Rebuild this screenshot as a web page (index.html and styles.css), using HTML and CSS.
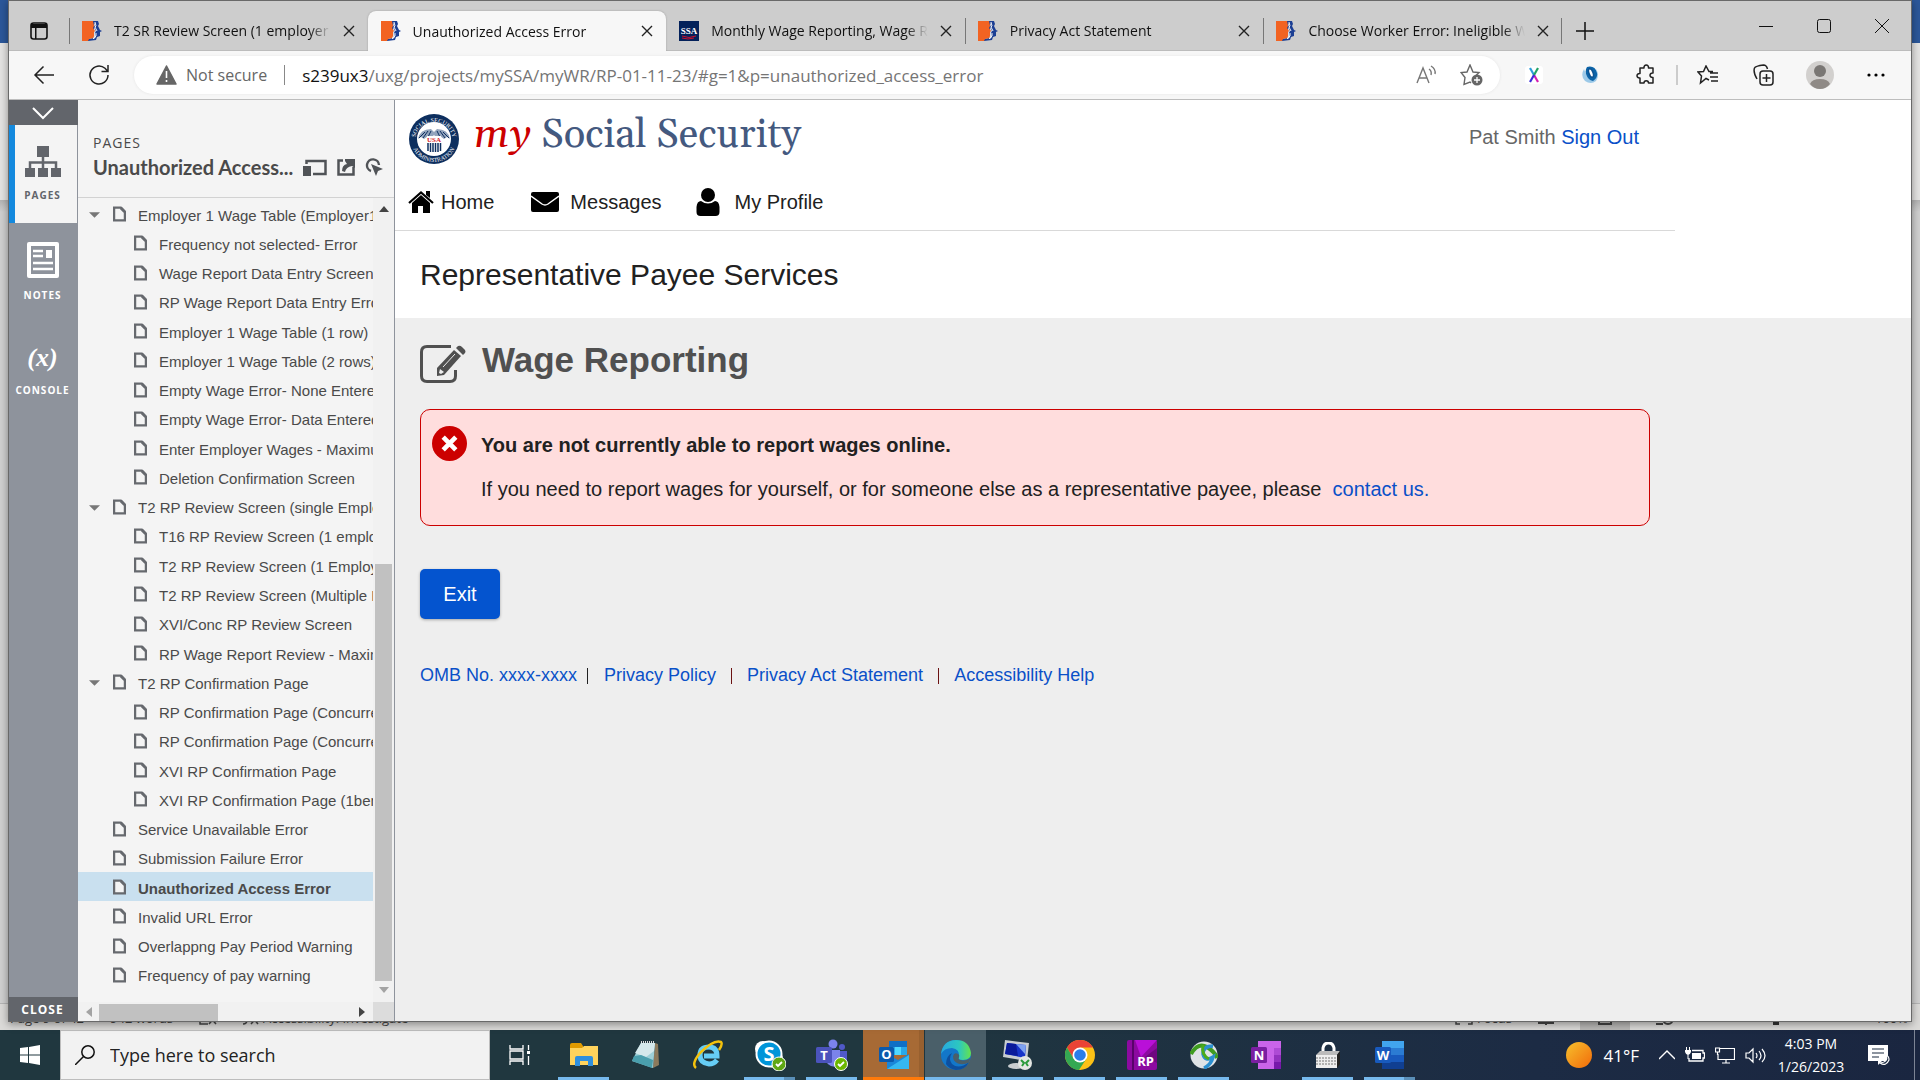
FILE: index.html
```html
<!DOCTYPE html>
<html lang="en">

<head>
  <meta charset="UTF-8">
  <meta name="viewport" content="width=device-width, initial-scale=1.0">
  <title>Unauthorized Access Error</title>
  <link rel="stylesheet" href="styles.css">
</head>

<body>
  <!-- shared icons -->
  <svg class="sprite" aria-hidden="true">
    <symbol id="i-face" viewBox="0 0 20 20">
      <path d="M10 0h6l1 3-1 2 2 4 2 1-2 1v4l-3 1-1 3-8 1v-2l6-1z" fill="#1c3f94"/>
      <path d="M12 1l1 3-1 2 2 4-1 2 1 4-2 2z" fill="#d5dbe8"/>
      <path d="M0 0h11l1 5-1 2 2 3-1 1v4l-1 2-4 1-1 2H0z" fill="#f26322"/>
      <path d="M13 1l1 4-1 1 2 4M14 12v3l-3 3" fill="none" stroke="#f4f4f4" stroke-width="1"/>
    </symbol>
    <symbol id="i-x" viewBox="0 0 12 12"><path d="M1 1l10 10M11 1L1 11" fill="none" stroke="#222" stroke-width="1.4"/></symbol>
    <symbol id="i-doc" viewBox="0 0 14 16"><path d="M1.200 1.200h7.300l4.300 4.300v9.300H1.200z" fill="#f4f4f4" stroke="#66696e" stroke-width="2.400"/><path d="M8.500 1.500l4 4" stroke="#66696e" stroke-width="3"/></symbol>
    <symbol id="i-down" viewBox="0 0 12 6"><path d="M0 0h12L6 6z" fill="#777"/></symbol>
  </svg>

  <div class="desktop">
    <!-- word window in the back -->
    <div class="word">
      <div class="word-title"></div>
      <div class="word-ribbon"></div>
      <div class="word-page"></div>
      <div class="word-status">
        <span>Page 9 of 42</span>
        <span>942 words</span>
        <svg width="18" height="14" viewBox="0 0 18 14"><path d="M1 1v12h8M10 5l7 8M17 5l-7 8" fill="none" stroke="#444" stroke-width="1.5"/></svg>
        <span class="word-access"><svg width="16" height="14" viewBox="0 0 16 14"><path d="M4 1v8q0 4-4 4M8 5l7 8M15 5l-7 8" fill="none" stroke="#444" stroke-width="1.5"/></svg>Accessibility: Investigate</span>
        <span class="word-focus"><svg width="18" height="14" viewBox="0 0 18 14"><path d="M1 9v4h4M17 9v4h-4M5 3h8v6H5z" fill="none" stroke="#444" stroke-width="1.5"/></svg>Focus</span>
        <svg width="16" height="14" viewBox="0 0 16 14"><path d="M0 12h16M8 0v14" stroke="#444" stroke-width="2"/></svg>
        <span class="word-view"><svg width="14" height="14" viewBox="0 0 14 14"><path d="M1 1h12v12H1zM4 9h6" fill="none" stroke="#444" stroke-width="2"/></svg></span>
        <svg width="18" height="14" viewBox="0 0 18 14"><path d="M0 13h7M1 8h5" stroke="#444" stroke-width="2"/><circle cx="12" cy="8" r="5" fill="none" stroke="#444" stroke-width="2"/></svg>
        <svg class="word-knob" width="6" height="14" viewBox="0 0 6 14"><path d="M0 0h6v14H0z" fill="#333"/></svg>
        <span class="word-zoom">100%</span>
      </div>
    </div>

    <div class="browser">
      <div class="tab-strip">
        <button class="workspaces" aria-label="Tab actions">
          <svg width="20" height="20" viewBox="0 0 20 20"><rect x="2" y="2" width="16" height="16" rx="2.5" fill="none" stroke="#111" stroke-width="1.6"/><path d="M2 3h16v4H2zM6 7h1.5v11H6z" fill="#111"/></svg>
        </button>
        <div class="tabs">
          <div class="tab">
            <svg class="favicon"><use href="#i-face"/></svg>
            <span class="tab-title">T2 SR Review Screen (1 employer</span>
            <button class="tab-close" aria-label="Close tab"><svg><use href="#i-x"/></svg></button>
          </div>
          <div class="tab active">
            <svg class="favicon"><use href="#i-face"/></svg>
            <span class="tab-title">Unauthorized Access Error</span>
            <button class="tab-close" aria-label="Close tab"><svg><use href="#i-x"/></svg></button>
          </div>
          <div class="tab no-line">
            <svg class="favicon" viewBox="0 0 20 20"><rect width="20" height="20" fill="#03215a"/><text x="10" y="13" text-anchor="middle" class="ssa-text">SSA</text><path d="M3 15q7 3 14 0M3 17q6 2 12 0" fill="none" stroke="#c8102e"/></svg>
            <span class="tab-title">Monthly Wage Reporting, Wage Reports</span>
            <button class="tab-close" aria-label="Close tab"><svg><use href="#i-x"/></svg></button>
          </div>
          <div class="tab">
            <svg class="favicon"><use href="#i-face"/></svg>
            <span class="tab-title">Privacy Act Statement</span>
            <button class="tab-close" aria-label="Close tab"><svg><use href="#i-x"/></svg></button>
          </div>
          <div class="tab">
            <svg class="favicon"><use href="#i-face"/></svg>
            <span class="tab-title">Choose Worker Error: Ineligible Worker</span>
            <button class="tab-close" aria-label="Close tab"><svg><use href="#i-x"/></svg></button>
          </div>
        </div>
        <button class="new-tab" aria-label="New tab"><svg width="18" height="18" viewBox="0 0 18 18"><path d="M9 0v18M0 9h18" stroke="#111" stroke-width="1.5"/></svg></button>
        <div class="window-buttons">
          <button aria-label="Minimize"><svg width="14" height="14" viewBox="0 0 14 14"><path d="M0 7.500h14" stroke="#111"/></svg></button>
          <button aria-label="Maximize"><svg width="14" height="14" viewBox="0 0 14 14"><rect x=".5" y=".5" width="13" height="13" rx="2" fill="none" stroke="#111"/></svg></button>
          <button aria-label="Close"><svg width="14" height="14" viewBox="0 0 14 14"><path d="M0 0l14 14M14 0L0 14" stroke="#111"/></svg></button>
        </div>
      </div>

      <div class="toolbar">
        <button class="tool" aria-label="Back"><svg width="22" height="20" viewBox="0 0 22 20"><path d="M21 10H2M10.500 1.500L2 10l8.500 8.500" fill="none" stroke="#222" stroke-width="1.5"/></svg></button>
        <button class="tool" aria-label="Refresh"><svg width="22" height="22" viewBox="0 0 22 22"><path d="M20 11a9 9 0 1 1-3-6.700L19.500 7M20 1v6.500h-6.500" fill="none" stroke="#222" stroke-width="1.5"/></svg></button>
        <div class="address">
          <svg width="21" height="20" viewBox="0 0 21 20"><path d="M10.500 1L20 19H1z" fill="#666" stroke="#666" stroke-width="1.500" stroke-linejoin="round"/><path d="M10.500 6v7M10.500 15v2" stroke="#fff" stroke-width="1.600"/></svg>
          <span class="not-secure">Not secure</span>
          <span class="address-line"></span>
          <span class="url"><b>s239ux3</b>/uxg/projects/mySSA/myWR/RP-01-11-23/#g=1&amp;p=unauthorized_access_error</span>
          <button aria-label="Read aloud"><svg width="22" height="20" viewBox="0 0 22 20"><path d="M1 18L7 3l6 15M3 13h8M13 4q3 2 2 6M15 1q5 3 4 8" fill="none" stroke="#777" stroke-width="1.400"/></svg></button>
          <button aria-label="Add to favorites"><svg width="24" height="22" viewBox="0 0 24 22"><path d="M11 19l-1-1-6 2.500 1-7-4-5 6-.5L10 1l3 7 6 .500-3 3" fill="none" stroke="#666" stroke-width="1.400"/><circle cx="17" cy="16" r="5.500" fill="#666"/><path d="M17 13v6M14 16h6" stroke="#fff" stroke-width="1.300"/></svg></button>
        </div>
        <div class="extensions">
          <button aria-label="Extension X"><svg width="18" height="18" viewBox="0 0 18 18"><rect width="18" height="18" rx="3" fill="#fff"/><path d="M5 2l4 7" stroke="#2d9cdb" stroke-width="2.200"/><path d="M9 9l4 7" stroke="#d61fb0" stroke-width="2.200"/><path d="M13 2L9 9" stroke="#21a366" stroke-width="2.200"/><path d="M9 9l-4 7" stroke="#3b2bd9" stroke-width="2.200"/></svg></button>
          <button aria-label="Extension ring"><svg width="18" height="18" viewBox="0 0 18 18"><path d="M3 3Q-1 10 4 15q6 4 11 0 4-6 0-12 1 9-4 10-5 0-8-10z" fill="#9cc9e8"/><path d="M6 1q8-2 10 6 1 5-4 8-5-1-7-7-1-4 1-7z" fill="#0c64a8"/><ellipse cx="10" cy="7" rx="2" ry="4.500" transform="rotate(-20 10 7)" fill="#fff" stroke="#0c5393" stroke-width="1.500"/></svg></button>
          <button aria-label="Extensions"><svg width="20" height="22" viewBox="0 0 20 22"><path d="M4 4h4c-.5-4 5-4 4.500 0H17v5c-4-.5-4 5 0 4.500V19h-4.500c0-3-4.500-3-4.500 0H4v-5c-4 .5-4-5 0-4.500z" fill="none" stroke="#222" stroke-width="1.500" stroke-linejoin="round"/></svg></button>
          <span class="tool-line"></span>
          <button aria-label="Favorites"><svg width="22" height="20" viewBox="0 0 22 20"><path d="M12 15l-3-1.500L3.500 18l1-7L1 7l5.500-.5L9 1l3 5.500h4M13 8h8M13 12h8M14 16h7" fill="none" stroke="#222" stroke-width="1.500"/></svg></button>
          <button aria-label="Collections"><svg width="22" height="22" viewBox="0 0 22 22"><path d="M4 15Q0 8 1.500 4q1-2 9-3 3 0 4 4" fill="none" stroke="#222" stroke-width="1.500"/><rect x="7" y="7" width="13" height="14" rx="3" fill="#f7f7f7" stroke="#222" stroke-width="1.500"/><path d="M13.500 10v8M9.500 14h8" stroke="#222" stroke-width="1.500"/></svg></button>
          <button aria-label="Profile"><svg width="28" height="28" viewBox="0 0 28 28"><circle cx="14" cy="14" r="14" fill="#d2d0ce"/><circle cx="14" cy="10" r="6" fill="#7a7774"/><path d="M4 23q2-5 10-5t10 5q-4 5-10 5T4 23z" fill="#8f8a86"/></svg></button>
          <button aria-label="Settings and more"><svg width="18" height="4" viewBox="0 0 18 4"><circle cx="2" cy="2" r="1.600"/><circle cx="9" cy="2" r="1.600"/><circle cx="16" cy="2" r="1.600"/></svg></button>
        </div>
      </div>

      <div class="viewport">
        <nav class="rail">
          <button class="rail-toggle" aria-label="Collapse"><svg width="24" height="14" viewBox="0 0 24 14"><path d="M2 2l10 10L22 2" fill="none" stroke="#fff" stroke-width="2"/></svg></button>
          <button class="rail-item current">
            <svg width="36" height="32" viewBox="0 0 36 32"><path d="M12 0h12v11H12zM0 22h10v9H0zM13 22h10v9H13zM26 22h10v9H26z" fill="#62656b"/><path d="M18 11v11M5 22v-5.500h26V22" fill="none" stroke="#62656b" stroke-width="2.500"/></svg>
            PAGES
          </button>
          <button class="rail-item">
            <svg width="32" height="36" viewBox="0 0 32 36"><rect width="32" height="36" rx="2" fill="#fff"/><path d="M4 4h24v28H4z" fill="#8e939c"/><path d="M6 9h10M6 14h10M6 21h20M6 27h20" stroke="#fff" stroke-width="2.500"/><path d="M19 8h6v8h-6z" fill="#fff"/></svg>
            NOTES
          </button>
          <button class="rail-item">
            <span class="fx">(x)</span>
            CONSOLE
          </button>
          <button class="rail-close">CLOSE</button>
        </nav>

        <aside class="pages">
          <header class="pages-head">
            <h3>PAGES</h3>
            <div class="pages-title">
              <h2>Unauthorized Access...</h2>
              <svg width="24" height="17" viewBox="0 0 24 17"><path d="M3.500 5V2h19v13H10" fill="none" stroke="#505357" stroke-width="2.500"/><path d="M0 7h8v10H0z" fill="#505357"/></svg>
              <svg width="18" height="17" viewBox="0 0 18 17"><path d="M6 1.500H1.500v14h15V8" fill="none" stroke="#505357" stroke-width="2.500"/><path d="M5 12q0-6 5-7L8 2V0h10v9l-3-2q-6 1-7 6z" fill="#505357"/></svg>
              <svg width="18" height="18" viewBox="0 0 18 18"><path d="M6 13A6 6 0 1 1 14 7" fill="none" stroke="#505357" stroke-width="2.400"/><path d="M6 6l12 5-5 2-2 5z" fill="#505357"/></svg>
            </div>
          </header>
          <div class="tree-area">
            <ul class="tree">
              <li class="open"><svg class="arrow"><use href="#i-down"/></svg><svg class="doc"><use href="#i-doc"/></svg>Employer 1 Wage Table (Employer1)</li>
              <li class="child"><svg class="doc"><use href="#i-doc"/></svg>Frequency not selected- Error</li>
              <li class="child"><svg class="doc"><use href="#i-doc"/></svg>Wage Report Data Entry Screen</li>
              <li class="child"><svg class="doc"><use href="#i-doc"/></svg>RP Wage Report Data Entry Error</li>
              <li class="child"><svg class="doc"><use href="#i-doc"/></svg>Employer 1 Wage Table (1 row)</li>
              <li class="child"><svg class="doc"><use href="#i-doc"/></svg>Employer 1 Wage Table (2 rows)</li>
              <li class="child"><svg class="doc"><use href="#i-doc"/></svg>Empty Wage Error- None Entered</li>
              <li class="child"><svg class="doc"><use href="#i-doc"/></svg>Empty Wage Error- Data Entered</li>
              <li class="child"><svg class="doc"><use href="#i-doc"/></svg>Enter Employer Wages - Maximum</li>
              <li class="child"><svg class="doc"><use href="#i-doc"/></svg>Deletion Confirmation Screen</li>
              <li class="open"><svg class="arrow"><use href="#i-down"/></svg><svg class="doc"><use href="#i-doc"/></svg>T2 RP Review Screen (single Employer)</li>
              <li class="child"><svg class="doc"><use href="#i-doc"/></svg>T16 RP Review Screen (1 employer)</li>
              <li class="child"><svg class="doc"><use href="#i-doc"/></svg>T2 RP Review Screen (1 Employer)</li>
              <li class="child"><svg class="doc"><use href="#i-doc"/></svg>T2 RP Review Screen (Multiple Employers)</li>
              <li class="child"><svg class="doc"><use href="#i-doc"/></svg>XVI/Conc RP Review Screen</li>
              <li class="child"><svg class="doc"><use href="#i-doc"/></svg>RP Wage Report Review - Maximum</li>
              <li class="open"><svg class="arrow"><use href="#i-down"/></svg><svg class="doc"><use href="#i-doc"/></svg>T2 RP Confirmation Page</li>
              <li class="child"><svg class="doc"><use href="#i-doc"/></svg>RP Confirmation Page (Concurrent)</li>
              <li class="child"><svg class="doc"><use href="#i-doc"/></svg>RP Confirmation Page (Concurrent)</li>
              <li class="child"><svg class="doc"><use href="#i-doc"/></svg>XVI RP Confirmation Page</li>
              <li class="child"><svg class="doc"><use href="#i-doc"/></svg>XVI RP Confirmation Page (1bene)</li>
              <li><svg class="doc"><use href="#i-doc"/></svg>Service Unavailable Error</li>
              <li><svg class="doc"><use href="#i-doc"/></svg>Submission Failure Error</li>
              <li class="selected"><svg class="doc"><use href="#i-doc"/></svg>Unauthorized Access Error</li>
              <li><svg class="doc"><use href="#i-doc"/></svg>Invalid URL Error</li>
              <li><svg class="doc"><use href="#i-doc"/></svg>Overlappng Pay Period Warning</li>
              <li><svg class="doc"><use href="#i-doc"/></svg>Frequency of pay warning</li>
            </ul>
            <div class="scroll-v">
              <svg width="10" height="6" viewBox="0 0 10 6"><path d="M0 6h10L5 0z" fill="#444"/></svg>
              <span class="thumb"></span>
              <svg width="10" height="6" viewBox="0 0 10 6"><path d="M0 0h10L5 6z" fill="#a3a3a3"/></svg>
            </div>
            <div class="scroll-h">
              <svg width="6" height="10" viewBox="0 0 6 10"><path d="M6 0v10L0 5z" fill="#a3a3a3"/></svg>
              <span class="thumb"></span>
              <svg width="6" height="10" viewBox="0 0 6 10"><path d="M0 0v10l6-5z" fill="#444"/></svg>
            </div>
            <div class="scroll-corner"></div>
          </div>
        </aside>

        <main class="site">
          <div class="site-top">
            <div class="brand">
              <svg width="50" height="50" viewBox="0 0 50 50" aria-label="Social Security Administration seal">
                <defs>
                  <path id="arc-top" d="M6 27a19 19 0 1 1 38 0"/>
                  <path id="arc-bottom" d="M2.500 26a22.500 22 0 0 0 45 0"/>
                </defs>
                <circle cx="25" cy="25" r="25" fill="#0d2f5f"/>
                <circle cx="25" cy="25" r="17" fill="#fff"/>
                <text class="seal-text"><textPath href="#arc-top" startOffset="50%" text-anchor="middle">SOCIAL SECURITY</textPath></text>
                <text class="seal-text"><textPath href="#arc-bottom" startOffset="50%" text-anchor="middle">ADMINISTRATION</textPath></text>
                <path d="M9 25q2-10 13-10l3 3 3-3q11 0 13 10l-3-2-3 2-4-3-3 2-3-3-3 3-3-2-4 3-3-2z" fill="#93a4bc"/>
                <path d="M10 24l6-6M14 24l5-7M19 23l3-6M40 24l-6-6M36 24l-5-7M31 23l-3-6" stroke="#0d2f5f"/>
                <path d="M18 22h14v7H18z" fill="#fff"/>
                <text x="25" y="28" text-anchor="middle" class="seal-usa">USA</text>
                <path d="M19 29v8M21.500 29v9M24 29v9M26.500 29v9M29 29v9M31.500 29v8" stroke="#0d2f5f" stroke-width="1.500"/>
              </svg>
              <h1><em>my</em> Social Security</h1>
            </div>
            <p class="user">Pat Smith <a href="#">Sign Out</a></p>
          </div>
          <nav class="site-nav">
            <a href="#"><svg width="26" height="22" viewBox="0 0 26 22"><path d="M13 4L4 12v10h6v-7h5v7h7V12z"/><path d="M1 12L13 1.500 25 12" fill="none" stroke="#000" stroke-width="2.200"/><path d="M18 0h4v7l-4-3z"/></svg><span>Home</span></a>
            <a href="#" class="messages"><svg width="28" height="20" viewBox="0 0 28 20"><rect width="28" height="20" rx="2"/><path d="M0 4l11 8q3 2 6 0L28 4" fill="none" stroke="#fff" stroke-width="1.500"/></svg><span>Messages</span></a>
            <a href="#" class="profile"><svg width="24" height="28" viewBox="0 0 24 28"><circle cx="12" cy="7" r="7"/><path d="M5 13q7 5 14 0 4 0 4.500 6v5q0 4-4 4h-15q-4 0-4-4v-5Q1 13 5 13z"/></svg><span>My Profile</span></a>
          </nav>
          <h2 class="service">Representative Payee Services</h2>

          <div class="content">
            <div class="content-inner">
              <div class="heading">
                <svg width="46" height="38" viewBox="0 0 46 38"><path d="M31 1.500H7Q1.500 1.500 1.500 7v24q0 5.500 5.500 5.500h23q5.500 0 5.500-5.500v-6" fill="none" stroke="#505050" stroke-width="3"/><path d="M17 31V23L34 5l7 6-17 19z" fill="#505050"/><path d="M36 3l2-2q2-1 4 1l3 3q1 2 0 3l-2 2z" fill="#505050"/><path d="M19 28l1-4 4 3-3 2z" fill="#eee"/><path d="M23 22L35 9" stroke="#eee"/></svg>
                <h2>Wage Reporting</h2>
              </div>
              <div class="alert" role="alert">
                <svg width="35" height="35" viewBox="0 0 36 36"><circle cx="18" cy="18" r="18" fill="#c00"/><path d="M11.500 11.500l13 13M24.500 11.500l-13 13" stroke="#fff" stroke-width="4.800"/></svg>
                <div>
                  <strong>You are not currently able to report wages online.</strong>
                  <p>If you need to report wages for yourself, or for someone else as a representative payee, please &nbsp;<a href="#">contact us.</a></p>
                </div>
              </div>
              <button class="exit">Exit</button>
              <footer class="links">
                <a href="#">OMB No. xxxx-xxxx</a><i></i>
                <a href="#">Privacy Policy</a><i></i>
                <a href="#">Privacy Act Statement</a><i></i>
                <a href="#">Accessibility Help</a>
              </footer>
            </div>
          </div>
        </main>
      </div>
    </div>

    <div class="taskbar">
      <button class="start" aria-label="Start"><svg width="20" height="20" viewBox="0 0 20 20"><path d="M0 3l8-1v7.500H0zM9 2l11-2v9.500H9zM0 10.500h8V18l-8-1zM9 10.500h11V20L9 18z" fill="#fff"/></svg></button>
      <label class="search">
        <svg width="20" height="20" viewBox="0 0 20 20"><circle cx="13" cy="7" r="6.200" fill="none" stroke="#111" stroke-width="1.500"/><path d="M8.500 11.500L0 20" stroke="#111" stroke-width="1.500"/></svg>
        <input type="text" placeholder="Type here to search" aria-label="Type here to search">
      </label>
      <button class="task-view" aria-label="Task View"><svg width="22" height="20" viewBox="0 0 22 20"><path d="M1 0v4h13V0M1 20v-4h13v4M1 6h13v8H1zM19.500 0v5M19.500 11v9" fill="none" stroke="#fff" stroke-width="1.300"/><path d="M18 6h3v3h-3z" fill="#fff"/></svg></button>
      <div class="apps">
        <button class="app running" aria-label="File Explorer"><svg width="28" height="24" viewBox="0 0 28 24"><path d="M0 2q0-2 2-2h9l2 3v3H0z" fill="#e09a00"/><path d="M0 5h12l2-2h14v19H0z" fill="#ffd35c"/><path d="M5 23v-8q0-2 2-2h14q2 0 2 2v8h-5v-5h-8v5z" fill="#2f8fdd"/></svg></button>
        <button class="app" aria-label="Notepad"><svg width="28" height="28" viewBox="0 0 28 28"><path d="M23 2l3 1 1 21-6 3z" fill="#8c7a5c"/><path d="M9 2l14 0-2 25L0 20z" fill="#9ed0d8"/><path d="M9 2l14 0-1 8-8 6-11-4z" fill="#d5e9ec"/><path d="M0 20l20 7 1-8-12-5-7 1z" fill="#4a9fad"/><path d="M9 1h14" stroke="#ddd" stroke-width="2" stroke-dasharray="1 1"/></svg></button>
        <button class="app" aria-label="Internet Explorer"><svg width="30" height="30" viewBox="0 0 30 30"><path d="M24 20q-3 4-8 4-9-1-9-9t9-8q8 0 8 9H11" fill="none" stroke="#66cdf5" stroke-width="5"/><path d="M3 28Q-2 24 7 13 21-1 28 2q2 2-2 8" fill="none" stroke="#f4c20d" stroke-width="2.500"/></svg></button>
        <button class="app running grouped" aria-label="Skype"><svg width="32" height="32" viewBox="0 0 32 32"><circle cx="9" cy="10" r="8" fill="#fff"/><circle cx="20" cy="20" r="9" fill="#fff"/><circle cx="15" cy="15" r="12.500" fill="#0095d9" stroke="#fff" stroke-width="2"/><text x="15" y="22" text-anchor="middle" class="app-letter big">S</text><circle cx="25" cy="25" r="7" fill="#5fa714" stroke="#fff"/><path d="M22 25l2 2 4-4" fill="none" stroke="#fff" stroke-width="1.800"/></svg></button>
        <button class="app running" aria-label="Teams"><svg width="32" height="32" viewBox="0 0 32 32"><circle cx="17" cy="5" r="4.500" fill="#7b83eb"/><circle cx="26" cy="8" r="3" fill="#5059c9"/><path d="M10 11h14v16q-14 3-14-8z" fill="#7b83eb"/><path d="M24 12h7v9q-2 6-7 4z" fill="#5059c9"/><rect y="8" width="16" height="16" rx="1.500" fill="#4b53bc"/><text x="8" y="21" text-anchor="middle" class="app-letter">T</text><circle cx="25" cy="25" r="6.500" fill="#6bb700" stroke="#fff"/><path d="M22 25l2 2 4-4" fill="none" stroke="#fff" stroke-width="1.800"/></svg></button>
        <button class="app alerting" aria-label="Outlook"><svg width="30" height="30" viewBox="0 0 30 30"><path d="M10 1h18v14H10z" fill="#0f6fc6"/><path d="M10 7h6v8h-6zM22 7h6v8h-6z" fill="#28a8ea"/><path d="M16 7h6v8h-6z" fill="#50d9ff"/><path d="M8 14l11 6 11-6v15H8z" fill="#1a86d9"/><path d="M8 29l22-14v14z" fill="#35b8f1"/><rect y="7" width="15" height="15" rx="1.500" fill="#0a5aad"/><text x="7.500" y="19" text-anchor="middle" class="app-letter">O</text></svg></button>
        <button class="app running current" aria-label="Microsoft Edge">
          <svg width="30" height="30" viewBox="0 0 30 30">
            <defs><linearGradient id="edge-top" x1="0" x2="1"><stop offset="0" stop-color="#27a8e0"/><stop offset=".6" stop-color="#2cc7c0"/><stop offset="1" stop-color="#66e34a"/></linearGradient></defs>
            <circle cx="15" cy="15" r="15" fill="#1377c9"/>
            <path d="M0 14Q2 0 15 0t15 13q0 7-8 7-6 0-4-3 1-8-7-9-8 0-11 6z" fill="url(#edge-top)"/>
            <path d="M11 13q-4 6 0 11 7 6 17-2-4 8-13 8-7-1-10-6 0-8 6-11z" fill="#0d4f9e"/>
            <path d="M18 17q-2 3 4 3.500 5 0 8-3l-2 5q-6 3-11 1-5-2-5-7 1-4 4-3 3 1 2 3.500z" fill="#4a5f69"/>
          </svg>
        </button>
        <button class="app running" aria-label="Remote Desktop"><svg width="30" height="30" viewBox="0 0 30 30"><path d="M2 0l24 3-2 18L0 17z" fill="#c8ccd0"/><path d="M4 3l19 2-1 13-20-4z" fill="#1734c8"/><path d="M4 3l9 1 2 12-13-2z" fill="#0a1a9a"/><path d="M13 4l10 1-1 9z" fill="#7da1f0"/><ellipse cx="13" cy="26" rx="8" ry="3" fill="#c9cdd0"/><circle cx="22" cy="23" r="7" fill="#e3e6e3"/><path d="M18 20l3 3-2 3M26 20l-3 3 2 3" fill="none" stroke="#2a9a3a" stroke-width="2"/></svg></button>
        <button class="app running" aria-label="Chrome"><svg width="30" height="30" viewBox="0 0 30 30"><circle cx="15" cy="15" r="15" fill="#fbc116"/><path d="M2 7.500A15 15 0 0 1 28 7.500H15l-6.500 11z" fill="#ea4335"/><path d="M2 7.500a15 15 0 0 0 12 22.500l7.500-11.500H8.500z" fill="#34a853"/><circle cx="15" cy="15" r="7.500" fill="#fff"/><circle cx="15" cy="15" r="5.800" fill="#2b7de9"/></svg></button>
        <button class="app running" aria-label="Axure RP"><svg width="30" height="30" viewBox="0 0 30 30"><rect width="30" height="30" rx="2" fill="#8c0aa0"/><path d="M8 0h22L14 17z" fill="#b910d8"/><path d="M30 8v15L18 17z" fill="#6f0780"/><path d="M6 0v30" stroke="#48005a" stroke-width="1.500"/><text x="18.500" y="26" text-anchor="middle" class="app-letter">RP</text></svg></button>
        <button class="app running" aria-label="AnyConnect"><svg width="28" height="28" viewBox="0 0 28 28"><circle cx="14" cy="14" r="13.500" fill="#dfe3e6"/><path d="M1 13Q8 1 17 6q8 5 10 11" fill="none" stroke="#3f9c1f" stroke-width="4"/><path d="M23 5q-10 0-10 8 2 8 10 3-2 8-9 11" fill="none" stroke="#2b8fd0" stroke-width="3.500"/><path d="M13 4q-2 10 6 14" fill="none" stroke="#4bab1a" stroke-width="3"/></svg></button>
        <button class="app" aria-label="OneNote"><svg width="30" height="28" viewBox="0 0 30 28"><path d="M7 0h23v28H7z" fill="#ca64ea"/><path d="M23 7h7v7h-7z" fill="#ae4bd5"/><path d="M23 14h7v7h-7z" fill="#9332bf"/><path d="M23 21h7v7h-7z" fill="#7719aa"/><rect y="6" width="16" height="16" rx="1.500" fill="#7a1fa2"/><text x="8" y="19" text-anchor="middle" class="app-letter">N</text></svg></button>
        <button class="app running" aria-label="Security"><svg width="24" height="26" viewBox="0 0 24 26"><path d="M7 13V6q1-5 5.500-5T18 6v6" fill="none" stroke="#fff" stroke-width="3"/><path d="M0 13l4-4h20l-3 4z" fill="#bbb"/><path d="M21 13l3-4v13l-3 4z" fill="#222"/><path d="M0 13h21v13H0z" fill="#eee"/><path d="M0 16h21M0 19h21M0 22h21" stroke="#777" stroke-dasharray="2 1"/></svg></button>
        <button class="app running grouped" aria-label="Word"><svg width="30" height="28" viewBox="0 0 30 28"><path d="M7 0h22v7H7z" fill="#41a5ee"/><path d="M7 7h22v7H7z" fill="#2b7cd3"/><path d="M7 14h22v7H7z" fill="#185abd"/><path d="M7 21h22v7H7z" fill="#103f91"/><rect y="6" width="16" height="16" rx="1.500" fill="#185abd"/><text x="8" y="19" text-anchor="middle" class="app-letter">W</text></svg></button>
      </div>
      <div class="tray">
        <button class="weather">
          <svg width="26" height="26" viewBox="0 0 26 26"><defs><linearGradient id="sun" x2="1" y2="1"><stop offset="0" stop-color="#f6c12d"/><stop offset="1" stop-color="#f26a0a"/></linearGradient></defs><circle cx="13" cy="13" r="13" fill="url(#sun)"/></svg>
          41°F
        </button>
        <div class="tray-icons">
          <svg width="16" height="10" viewBox="0 0 16 10"><path d="M0 9l8-8 8 8" fill="none" stroke="#fff" stroke-width="1.400"/></svg>
          <svg width="20" height="16" viewBox="0 0 20 16"><path d="M7 6h9v6H7z" fill="#fff"/><path d="M7 3.500h11v2.500h1.500v5H18v3H4v-3" fill="none" stroke="#fff" stroke-width="1.300"/><path d="M0 3h6v2q-1 3-3 3T0 5zM1 0h1v3H1zM4 0h1v3H4zM2.500 7h1v5h-1z" fill="#fff"/></svg>
          <svg width="20" height="17" viewBox="0 0 20 17"><path d="M5 1.500h14.500v11H3V7M11 12v3.500M7 16h8M.5 1h4v4h-4zM2.500 5v3" fill="none" stroke="#fff" stroke-width="1.200"/></svg>
          <svg width="21" height="17" viewBox="0 0 21 17"><path d="M1 6h3l4-4v13l-4-4H1zM11 6q2 3 0 5M14 4q4 5 0 9M17 2q6 7 0 13" fill="none" stroke="#fff" stroke-width="1.200"/></svg>
        </div>
        <div class="clock"><span>4:03 PM</span><span>1/26/2023</span></div>
        <button class="notify" aria-label="Notifications"><svg width="22" height="22" viewBox="0 0 22 22"><path d="M0 1h20v16h-6l-4 4v-4H0z" fill="#fff"/><path d="M4 5h12M4 9h12M4 13h7" stroke="#1b2a41" stroke-width="1.200"/><path d="M18 11q3 7-6 8 6 4 9-3 0-4-3-5z" fill="#1b2a41" stroke="#fff" stroke-width="1.200"/></svg></button>
        <span class="show-desktop"></span>
      </div>
    </div>
  </div>
</body>

</html>
```

FILE: styles.css
```css
* {
  box-sizing: border-box;
  margin: 0;
  padding: 0;
}

body {
  font-family: 'Liberation Sans', Arial, sans-serif;
  font-size: 20px;
  color: #212121;
  overflow: hidden;
}

button {
  font: inherit;
  color: inherit;
  background: none;
  border: 0;
  display: flex;
  align-items: center;
  justify-content: center;
}

svg {
  display: block;
  flex-shrink: 0;
}

a {
  color: #0a50c8;
  text-decoration: none;
}

ul {
  list-style: none;
}

.sprite {
  width: 0;
  height: 0;
  position: absolute;
}

.desktop {
  height: 100vh;
  display: grid;
  grid-template-columns: minmax(0, 1fr);
  grid-template-rows: minmax(0, 1fr) 50px;
}

/* word window behind the browser */
.word {
  grid-area: 1 / 1;
  display: flex;
  flex-direction: column;
}

.word-title {
  height: 43px;
  background: #2b579a;
}

.word-ribbon {
  height: 157px;
  background: #e4e3e2;
}

.word-page {
  flex: 1;
  background: linear-gradient(#b4b4b4, #d0d0d0 12px);
}

.word-status {
  height: 27px;
  padding: 2px 12px 0 10px;
  background: #dbdad8;
  border-top: 1px solid #b5b5b5;
  display: flex;
  align-items: center;
  gap: 26px;
  font-family: 'Open Sans', sans-serif;
  font-size: 13px;
  color: #444;
}

.word-access,
.word-focus {
  display: flex;
  align-items: center;
  gap: 4px;
}

.word-focus {
  margin-left: auto;
}

.word-view {
  padding: 6px 18px;
  background: #b9b8b6;
}

.word-knob {
  margin-left: 73px;
}

.word-zoom {
  margin-left: 70px;
}

/* browser window */
.browser {
  grid-area: 1 / 1;
  z-index: 1;
  margin: 0 8px 8px;
  border: 1px solid #696969;
  box-shadow: 0 2px 8px rgba(0, 0, 0, 0.4);
  display: flex;
  flex-direction: column;
  font-family: 'Open Sans', 'Segoe UI', sans-serif;
}

.tab-strip {
  height: 50px;
  background: #cdcdcd;
  border-bottom: 1px solid #bcbcbc;
  display: flex;
}

.workspaces {
  width: 60px;
  padding-top: 11px;
}

.tabs {
  display: flex;
  padding-top: 10px;
  flex: 0 1 1493px;
  min-width: 0;
}

.tab {
  flex: 1 1 0;
  min-width: 0;
  display: flex;
  align-items: center;
  gap: 12px;
  padding: 0 13px;
  font-size: 14px;
  color: #111;
  background: linear-gradient(#777, #777) left center / 1px 26px no-repeat;
}

.tab:last-child {
  background: linear-gradient(#777, #777) left center / 1px 26px no-repeat, linear-gradient(#777, #777) right center / 1px 26px no-repeat;
}

.tab.active {
  height: 40px;
  background: #f7f7f7;
  border-radius: 8px 8px 0 0;
  box-shadow: 0 0 2px #999;
  clip-path: inset(-3px -3px 0);
}

.tab.no-line {
  background: none;
}

.favicon {
  width: 20px;
  height: 20px;
}

.ssa-text {
  font-family: 'Liberation Serif', serif;
  font-size: 9px;
  font-weight: bold;
  fill: #fff;
}

.tab-title {
  flex: 1;
  overflow: hidden;
  white-space: nowrap;
  -webkit-mask-image: linear-gradient(90deg, #000 90%, transparent);
  mask-image: linear-gradient(90deg, #000 90%, transparent);
}

.tab-close svg {
  width: 12px;
  height: 12px;
}

.new-tab {
  width: 46px;
  padding-top: 10px;
}

.window-buttons {
  display: flex;
  margin-left: auto;
}

.window-buttons button {
  width: 58px;
}

.toolbar {
  height: 49px;
  background: #f7f7f7;
  border-bottom: 1px solid #bdbdbd;
  display: flex;
  align-items: center;
  padding: 0 7px;
}

.tool {
  width: 55px;
  height: 38px;
}

.address {
  flex: 1;
  min-width: 0;
  height: 38px;
  margin-left: 8px;
  padding: 0 16px 0 22px;
  border-radius: 19px;
  background: #fff;
  box-shadow: 0 0 3px #e4e4e4;
  display: flex;
  align-items: center;
  font-size: 17px;
  color: #757575;
}

.address button {
  margin-left: 22px;
}

.not-secure {
  margin-left: 9px;
  white-space: nowrap;
  color: #666;
  font-size: 16px;
}

.address-line {
  width: 1px;
  height: 20px;
  margin: 0 17px;
  background: #888;
}

.url {
  flex: 1;
  overflow: hidden;
  white-space: nowrap;
}

.url b {
  font-weight: normal;
  color: #111;
}

.extensions {
  display: flex;
  align-items: center;
  margin-left: 6px;
}

.extensions button {
  width: 56px;
}

.tool-line {
  width: 2px;
  height: 20px;
  background: #ccc;
  margin: 0 2px;
}

.viewport {
  flex: 1;
  min-height: 0;
  display: flex;
}

/* left rail */
.rail {
  width: 69px;
  background: #8e939c;
  color: #fff;
  display: flex;
  flex-direction: column;
  font-size: 10px;
  line-height: 14px;
}

.rail button {
  font-weight: bold;
  letter-spacing: 1px;
  padding-right: 2px;
}

.rail-toggle {
  height: 25px;
  background: #62656b;
}

.rail-item {
  flex-direction: column;
  gap: 10px;
  height: 98px;
}

.rail .rail-item.current {
  background: #f4f4f4;
  color: #62656b;
  border-left: 6px solid #1389de;
  border-right: 1px solid #8e939c;
  padding-right: 7px;
}

.fx {
  font: italic bold 26px/30px 'Liberation Serif', serif;
  letter-spacing: 0;
}

.rail .rail-close {
  height: 24px;
  margin-top: auto;
  padding-top: 2px;
  background: #62656b;
  font-size: 12px;
}

/* page list */
.pages {
  width: 317px;
  background: #f4f4f4;
  border-right: 1px solid #8e939c;
  display: flex;
  flex-direction: column;
  color: #4a4a4a;
}

.pages-head {
  height: 98px;
  padding: 32px 12px 0 15px;
  border-bottom: 1px solid #d2d2d2;
}

.pages-head h3 {
  font-size: 14px;
  line-height: 22px;
  font-weight: normal;
  letter-spacing: 1px;
}

.pages-title {
  display: flex;
  align-items: center;
  gap: 10px;
  line-height: 26px;
}

.pages-title h2 {
  flex: 1;
  font-family: Lato, sans-serif;
  font-size: 20px;
  white-space: nowrap;
}

.tree-area {
  flex: 1;
  min-height: 0;
  display: grid;
  grid-template-columns: minmax(0, 1fr) 21px;
  grid-template-rows: minmax(0, 1fr) 19px;
}

.tree {
  padding: 1px 0 13px;
  display: grid;
  grid-auto-rows: minmax(0, 1fr);
  overflow: hidden;
  font-family: 'Liberation Sans', Arial, sans-serif;
  font-size: 15px;
}

.tree li {
  display: flex;
  align-items: center;
  padding: 3px 0 0 35px;
  white-space: nowrap;
}

.tree li.child {
  padding-left: 56px;
}

.tree li.open {
  padding-left: 11px;
}

.tree li.selected {
  background: #c9e0ef;
  font-weight: bold;
}

.arrow {
  width: 11px;
  height: 6px;
  margin-right: 13px;
}

.doc {
  width: 13px;
  height: 16px;
  margin: 0 12px 2px 0;
}

.scroll-v,
.scroll-h {
  background: #f1f1f1;
  display: flex;
  align-items: center;
}

.scroll-v {
  flex-direction: column;
  padding: 8px 0 9px;
}

.scroll-v .thumb {
  width: 17px;
  height: 53%;
  margin: auto 0 6px;
  background: #c1c1c1;
}

.scroll-h {
  padding: 0 8px;
}

.scroll-h .thumb {
  width: 119px;
  height: 17px;
  margin: 2px auto 0 7px;
  background: #c1c1c1;
}

.scroll-corner {
  background: #dcdcdc;
}

/* site */
.site {
  flex: 1;
  min-width: 0;
  background: #fff;
  display: flex;
  flex-direction: column;
  font-family: 'Liberation Sans', Arial, sans-serif;
}

.site-top {
  max-width: 1280px;
  height: 76px;
  padding: 14px 36px 0 14px;
  display: flex;
  justify-content: space-between;
  align-items: flex-start;
}

.brand {
  display: flex;
  gap: 15px;
}

.brand h1 {
  font: 40px/44px Gelasio, 'Liberation Serif', serif;
  color: #44597f;
}

.brand em {
  color: #c00;
}

.seal-text {
  font-family: 'Liberation Serif', serif;
  font-size: 6px;
  fill: #fff;
}

.seal-usa {
  font-family: 'Liberation Serif', serif;
  font-size: 7px;
  font-weight: bold;
  fill: #d8232a;
}

.user {
  line-height: 46px;
  color: #666;
}

.site-nav {
  max-width: 1280px;
  height: 55px;
  padding: 0 13px 2px;
  border-bottom: 1px solid #d9d9d9;
  display: flex;
  align-items: center;
}

.site-nav a {
  display: flex;
  align-items: center;
  gap: 7px;
  margin-right: 37px;
  color: #212121;
}

.site-nav .messages {
  gap: 11px;
  margin-right: 34px;
}

.site-nav .profile {
  gap: 15px;
}

.service {
  height: 87px;
  padding-left: 25px;
  font-size: 30px;
  line-height: 87px;
  font-weight: normal;
}

.content {
  flex: 1;
  background: #eee;
}

.content-inner {
  max-width: 1280px;
  padding: 19px 25px 0;
}

.heading {
  display: flex;
  gap: 16px;
  height: 72px;
  color: #505050;
}

.heading svg {
  margin-top: 8px;
}

.heading h2 {
  font-size: 35px;
  line-height: 46px;
}

.alert {
  border: 1px solid #c00;
  border-radius: 10px;
  background: #fdd;
  height: 117px;
  padding: 16px 11px;
  display: flex;
  gap: 14px;
}

.alert strong {
  display: block;
  line-height: 38px;
}

.alert p {
  line-height: 50px;
}

.exit {
  width: 80px;
  height: 50px;
  margin-top: 43px;
  border-radius: 5px;
  background: #0454cf;
  box-shadow: 0 1px 3px rgba(0, 0, 0, 0.3);
  color: #fff;
}

.links {
  display: flex;
  align-items: center;
  margin-top: 44px;
  font-size: 18px;
  line-height: 24px;
}

.links i {
  width: 1px;
  height: 16px;
  margin: 2px 15px 0;
  background: #6b1212;
}

.links i:first-of-type {
  margin: 2px 16px 0 10px;
  background: #212121;
}

/* taskbar */
.taskbar {
  background: linear-gradient(90deg, #20373f 45%, #1c2b44 80%, #1a2640);
  color: #fff;
  display: flex;
  font-family: 'Open Sans', 'Segoe UI', sans-serif;
}

.start {
  width: 60px;
}

.search {
  width: 430px;
  padding: 0 14px;
  background: #f2f2f2;
  border: 1px solid #bdbdbd;
  display: flex;
  align-items: center;
  gap: 15px;
}

.search input {
  flex: 1;
  border: 0;
  background: none;
  outline: none;
  font-family: inherit;
  font-size: 18px;
}

.search input::placeholder {
  color: #222;
  opacity: 1;
}

.task-view {
  width: 63px;
  padding-right: 3px;
}

.apps {
  display: flex;
  gap: 1px;
}

.app {
  width: 61px;
}

.app.running {
  background: linear-gradient(#76b9ed, #76b9ed) center bottom / 51px 3px no-repeat;
}

.app.grouped {
  background: linear-gradient(90deg, #76b9ed 40px, #5a8fb8 40px) center bottom / 51px 3px no-repeat;
}

.app.alerting {
  background: linear-gradient(90deg, #a76a35 56px, #98602f 56px);
  border-bottom: 3px solid #ff7a0a;
  padding-top: 3px;
}

.app.current {
  background: #4a5f69;
  border-bottom: 3px solid #76b9ed;
  padding-top: 3px;
}

.app-letter {
  font-family: 'Open Sans', sans-serif;
  font-size: 13px;
  font-weight: bold;
  fill: #fff;
}

.app-letter.big {
  font-size: 20px;
}

.tray {
  margin-left: auto;
  display: flex;
  align-items: center;
}

.weather {
  gap: 12px;
  font-size: 17px;
}

.tray-icons {
  display: flex;
  align-items: center;
  gap: 10px;
  margin-left: 20px;
}

.clock {
  width: 90px;
  display: flex;
  flex-direction: column;
  align-items: center;
  font-size: 14px;
  line-height: 23px;
}

.notify {
  margin: 0 24px 0 12px;
}

.show-desktop {
  width: 6px;
  height: 50px;
  border-left: 1px solid #7c8494;
}
```
